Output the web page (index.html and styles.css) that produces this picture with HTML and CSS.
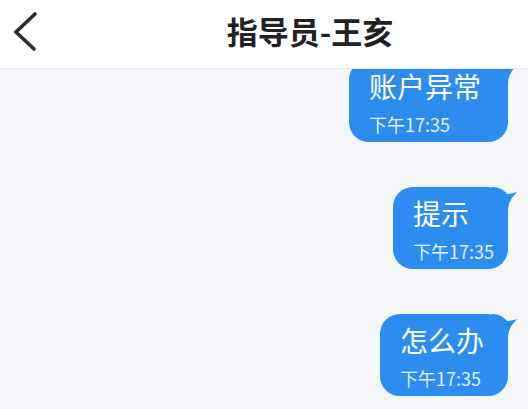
FILE: index.html
```html
<!DOCTYPE html>
<html lang="zh-CN">
<head>
  <meta charset="UTF-8">
  <title>指导员-王亥</title>
  <link rel="stylesheet" href="styles.css">
</head>
<body>

  <!-- Top bar -->
  <header class="top-bar">
    <a class="back-btn" href="#">
      <svg width="40" height="56" viewBox="0 0 40 56">
        <polyline points="35,11 16,29 34,46" fill="none" stroke="#2b2b2b" stroke-width="3.6" stroke-linecap="round" stroke-linejoin="miter"/>
      </svg>
    </a>
    <h1 class="title">指导员-王亥</h1>
  </header>

  <!-- Messages -->
  <main class="chat">
    <div class="bubble bubble-wide">
      <div class="msg-text">账户异常</div>
      <div class="msg-time">下午17:35</div>
      <svg class="tail" width="26" height="30" viewBox="0 0 26 30"><path d="M0 0 C7 0 12 3 15 7 C18 7 21 6 25 5 C20 10 16 16 16 24 L16 30 L0 30 Z"/></svg>
    </div>

    <div class="bubble bubble-short">
      <div class="msg-text">提示</div>
      <div class="msg-time">下午17:35</div>
      <svg class="tail" width="26" height="30" viewBox="0 0 26 30"><path d="M0 0 C7 0 12 3 15 7 C18 7 21 6 25 5 C20 10 16 16 16 24 L16 30 L0 30 Z"/></svg>
    </div>

    <div class="bubble">
      <div class="msg-text">怎么办</div>
      <div class="msg-time">下午17:35</div>
      <svg class="tail" width="26" height="30" viewBox="0 0 26 30"><path d="M0 0 C7 0 12 3 15 7 C18 7 21 6 25 5 C20 10 16 16 16 24 L16 30 L0 30 Z"/></svg>
    </div>
  </main>

</body>
</html>
```

FILE: styles.css
```css
html, body {
  margin: 0;
  padding: 0;
  height: 100%;
  overflow: hidden;
  font-family: "Noto Sans CJK SC", "Noto Sans", sans-serif;
  background: #f5f6f9;
}

.top-bar {
  position: relative;
  z-index: 2;
  display: flex;
  align-items: center;
  height: 68px;
  background: #fff;
  border-bottom: 1px solid #eceef1;
}

.back-btn {
  display: block;
  width: 40px;
  height: 56px;
  margin-top: -6px;
}

.title {
  flex: 1;
  margin: -6px 0 0;
  padding-left: 52px;
  text-align: center;
  font-size: 31px;
  font-weight: 700;
  color: #222;
  line-height: 40px;
}

.chat {
  display: flex;
  flex-direction: column;
  align-items: flex-end;
  gap: 45px;
  margin-top: -9px;
  padding-right: 20px;
}

.bubble {
  position: relative;
  padding: 8px 24px 7px 20px;
  background: #2d8cf0;
  border-radius: 20px;
  color: #fff;
}

.bubble-wide {
  padding-right: 27px;
}

.bubble-short {
  padding-right: 14px;
}

.msg-text {
  font-size: 28px;
  line-height: 36px;
}

.msg-time {
  margin-top: 9px;
  font-size: 18px;
  line-height: 22px;
  color: #e3f0ff;
}

.tail {
  position: absolute;
  top: 0;
  right: -10px;
  fill: #2d8cf0;
}
```
